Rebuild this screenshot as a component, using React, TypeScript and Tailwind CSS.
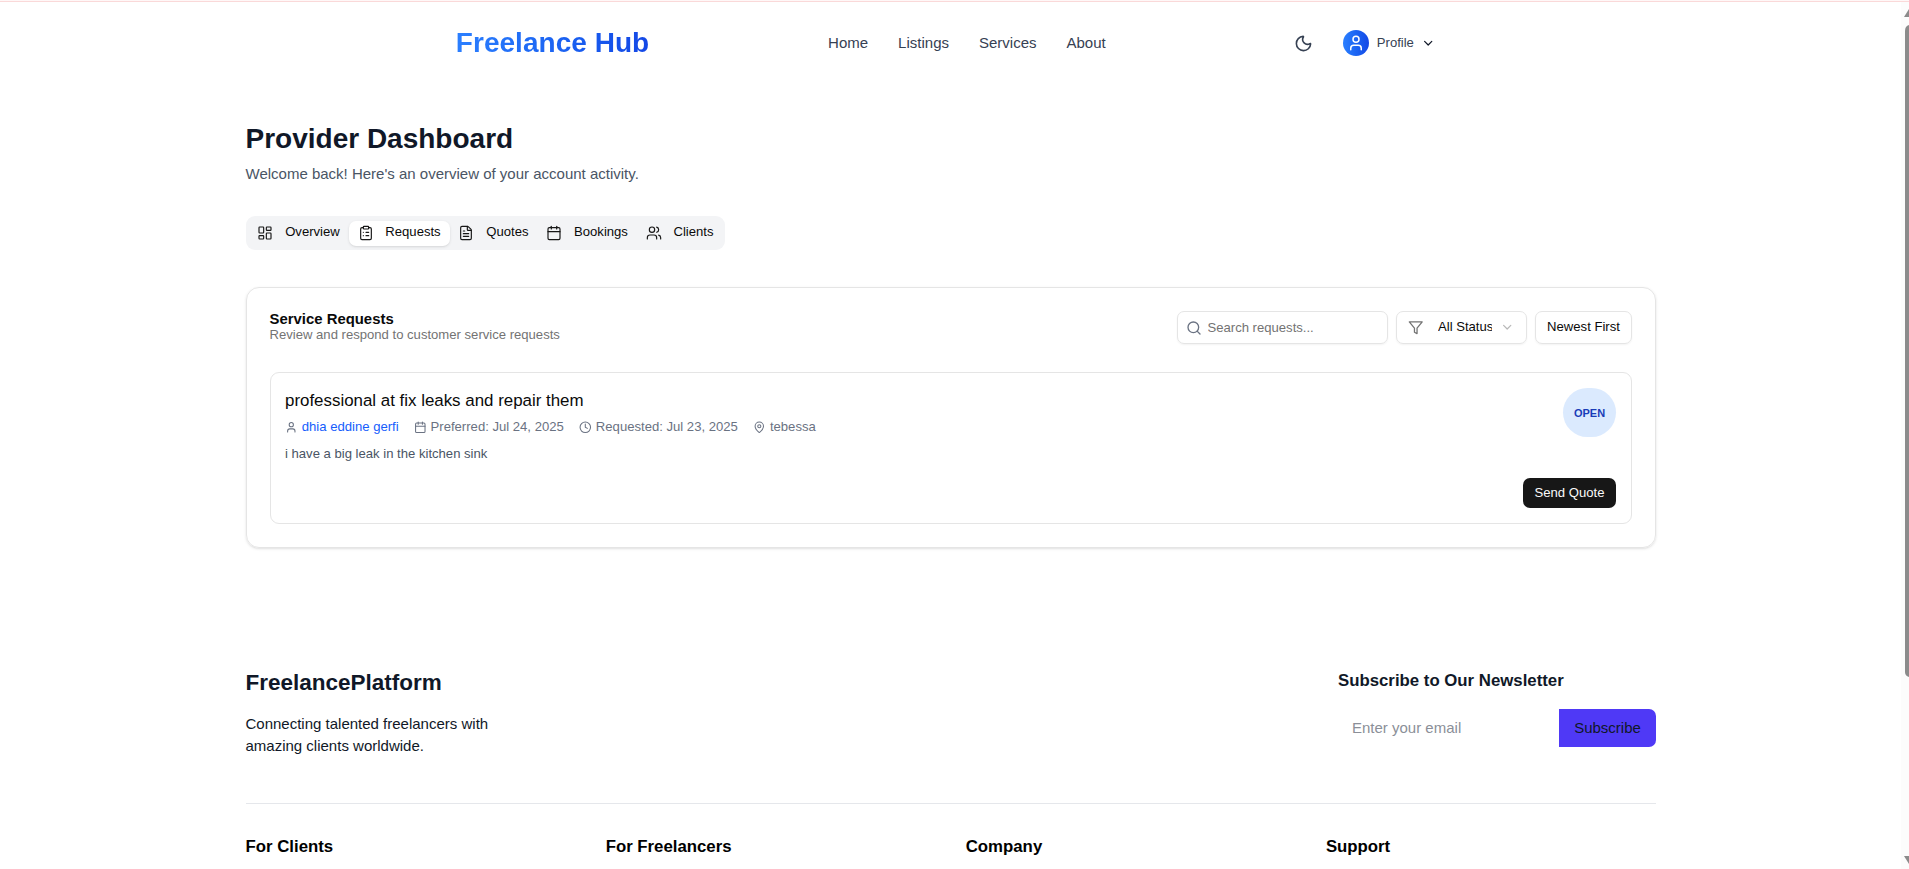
import React from "react";
import {
  Calendar,
  ChevronDown,
  ClipboardList,
  Clock,
  FileText,
  LayoutDashboard,
  MapPin,
  Moon,
  Search,
  User,
  Users,
  type LucideIcon,
} from "lucide-react";

const navLinks = ["Home", "Listings", "Services", "About"];

const tabs: { label: string; icon: LucideIcon }[] = [
  { label: "Overview", icon: LayoutDashboard },
  { label: "Requests", icon: ClipboardList },
  { label: "Quotes", icon: FileText },
  { label: "Bookings", icon: Calendar },
  { label: "Clients", icon: Users },
];

const footerColumns = ["For Clients", "For Freelancers", "Company", "Support"];

function FunnelIcon() {
  return (
    <svg
      viewBox="0 0 24 24"
      className="size-[15.5px] shrink-0 text-[#737373]"
      fill="none"
      stroke="currentColor"
      strokeWidth="2"
      strokeLinecap="round"
      strokeLinejoin="round"
    >
      <polygon points="22 3 2 3 10 12.46 10 19 14 21 14 12.46 22 3" />
    </svg>
  );
}

function Header() {
  return (
    <header className="flex h-[82px] items-center pl-[455.8px]">
      <div className="w-[372.3px]">
        <span className="inline-block bg-linear-to-r from-[#2b7fff] to-[#1447e6] bg-clip-text text-[28px] leading-8 font-bold tracking-[0.04px] text-transparent">
          Freelance Hub
        </span>
      </div>
      <nav className="flex w-[466.2px] gap-[30px] text-[15px] leading-[22px] text-[#364153]">
        {navLinks.map((link) => (
          <a key={link}>{link}</a>
        ))}
      </nav>
      <Moon className="mr-[30px] size-[19px] text-[#364153]" strokeWidth={2} />
      <div className="flex items-center">
        <span className="flex size-[26px] items-center justify-center rounded-full bg-linear-to-r from-[#2b7fff] to-[#1447e6]">
          <User className="size-[18px] text-white" />
        </span>
        <span className="ml-[7.5px] pb-px text-[13.1px] leading-[18px] text-[#364153]">Profile</span>
        <ChevronDown className="ml-[7px] size-[14.4px] text-[#101828]" />
      </div>
    </header>
  );
}

function Tabs() {
  return (
    <div className="mt-[31px] flex h-[34px] w-fit items-center rounded-[9px] bg-[#f3f4f6] px-[3px]">
      {tabs.map(({ label, icon: Icon }) => (
        <button
          key={label}
          className={
            label === "Requests"
              ? "flex h-[25px] items-center rounded-[7px] bg-white px-[8.9px] shadow-sm"
              : "flex h-[25px] items-center rounded-[7px] px-[8.9px]"
          }
        >
          <Icon className="mr-[11.8px] size-[16px] text-[#171717]" strokeWidth={1.75} />
          <span className="pb-[2px] text-[13.1px] leading-[18px] text-[#0a0a0a]">{label}</span>
        </button>
      ))}
    </div>
  );
}

function RequestCard() {
  return (
    <article className="mt-[28px] h-[152px] rounded-[9px] border border-[#e5e5e5] pt-[15px] pr-[15px] pl-[14.5px]">
      <div className="flex h-[90px] items-start justify-between">
        <div>
          <h3 className="text-[16.9px] leading-[25px] text-[#0a0a0a]">
            professional at fix leaks and repair them
          </h3>
          <div className="mt-[5px] flex items-center text-[13.1px] leading-[18px] text-[#6a7282]">
            <User className="mt-px mr-[4.2px] size-[12.6px]" />
            <a className="mr-[15.2px] text-[#155dfc]">dhia eddine gerfi</a>
            <Calendar className="mt-px mr-[4.2px] size-[12.6px]" />
            <span className="mr-[15.3px]">Preferred: Jul 24, 2025</span>
            <Clock className="mt-px mr-[4.2px] size-[12.6px]" />
            <span className="mr-[15.3px]">Requested: Jul 23, 2025</span>
            <MapPin className="mt-px mr-[4.2px] size-[12.6px]" />
            <span>tebessa</span>
          </div>
          <p className="mt-[9px] text-[13.1px] leading-[18px] text-[#4a5565]">
            i have a big leak in the kitchen sink
          </p>
        </div>
        <span className="flex h-[49px] w-[53px] items-center justify-center rounded-full bg-[#dbeafe] text-[11px] leading-[14px] font-bold text-[#193cb8]">
          OPEN
        </span>
      </div>
      <div className="flex justify-end">
        <button className="h-[30px] w-[93px] rounded-[7px] bg-[#171717] pb-px text-[13.1px] leading-[18px] text-[#fafafa]">
          Send Quote
        </button>
      </div>
    </article>
  );
}

function ServiceRequests() {
  return (
    <section className="mt-[37px] h-[261px] rounded-[13px] border border-[#e5e5e5] px-[23px] pt-[23px] shadow-sm">
      <div className="flex h-[33px] justify-between">
        <div className="pt-px">
          <h2 className="text-[14.9px] leading-[15px] font-bold text-[#0a0a0a]">Service Requests</h2>
          <p className="text-[13.1px] leading-[16px] text-[#737373]">
            Review and respond to customer service requests
          </p>
        </div>
        <div className="flex gap-[8px]">
          <label className="flex h-[33px] w-[211px] items-center rounded-[7px] border border-[#e5e5e5] px-[7.5px] shadow-xs">
            <Search className="mr-[6px] size-[16px] text-[#6a7282]" />
            <input
              className="w-[160px] text-[13.1px] leading-[18px] outline-none placeholder:text-[#737373]"
              placeholder="Search requests..."
            />
          </label>
          <button className="flex h-[33px] w-[131px] items-center rounded-[7px] border border-[#e5e5e5] pl-[11px] shadow-xs">
            <FunnelIcon />
            <span className="ml-[14.5px] w-[54px] overflow-hidden pb-[2px] text-left text-[13.1px] leading-[18px] whitespace-nowrap text-[#0a0a0a]">
              All Status
            </span>
            <ChevronDown className="ml-[8px] size-[14.4px] text-[#737373] opacity-50" />
          </button>
          <button className="h-[33px] w-[97px] rounded-[7px] border border-[#e5e5e5] pb-[2px] text-[13.1px] leading-[18px] text-[#0a0a0a] shadow-xs">
            Newest First
          </button>
        </div>
      </div>
      <RequestCard />
    </section>
  );
}

function Footer() {
  return (
    <footer className="mt-[120px]">
      <div className="flex h-[136px] justify-between border-b border-[#e5e7eb]">
        <div>
          <h2 className="text-[22.5px] leading-[29px] font-bold text-[#101828]">FreelancePlatform</h2>
          <p className="mt-[16px] w-[260px] text-[15px] leading-[22px] text-[#101828]">
            Connecting talented freelancers with amazing clients worldwide.
          </p>
        </div>
        <div className="w-[318px]">
          <h3 className="text-[16.8px] leading-[25px] font-bold text-[#101828]">
            Subscribe to Our Newsletter
          </h3>
          <form className="mt-[16px] flex h-[38px]">
            <input
              className="w-[221px] px-[14px] text-[15px] outline-none placeholder:text-[#8b8f98]"
              placeholder="Enter your email"
            />
            <button className="w-[97px] rounded-r-[7px] bg-[#4f39f6] text-[15px] text-[#101828]">
              Subscribe
            </button>
          </form>
        </div>
      </div>
      <div className="mt-[30px] grid grid-cols-4 gap-[30px]">
        {footerColumns.map((title) => (
          <h4 key={title} className="text-[16.8px] leading-[25px] font-bold text-black">
            {title}
          </h4>
        ))}
      </div>
    </footer>
  );
}

function ScrollBar() {
  return (
    <div className="absolute top-[2px] right-0 h-[867px] w-[8px] overflow-hidden bg-[#fcfcfc]">
      <svg className="absolute top-0 left-0" width="8" height="867" viewBox="0 0 8 867" fill="#8b8b8b">
        <path d="M3 15 L8 7 V15 Z" />
        <path d="M8 23 Q4 24 4 29 V670 Q4 674 8 675 Z" />
        <path d="M3 854 H8 V862 Z" />
      </svg>
    </div>
  );
}

export default function App() {
  return (
    <div className="relative h-[869px] w-full overflow-hidden bg-white font-['Liberation_Sans',Arial,sans-serif]">
      <div className="h-[2px] border-b border-[#fad9d9] bg-[#fff7f7]" />
      <Header />
      <main className="ml-[245.5px] w-[1410.5px] pt-[39px]">
        <h1 className="text-[28px] leading-[32px] font-bold text-[#101828]">Provider Dashboard</h1>
        <p className="mt-[8px] text-[15px] leading-[22px] text-[#4a5565]">
          Welcome back! Here's an overview of your account activity.
        </p>
        <Tabs />
        <ServiceRequests />
        <Footer />
      </main>
      <ScrollBar />
    </div>
  );
}
